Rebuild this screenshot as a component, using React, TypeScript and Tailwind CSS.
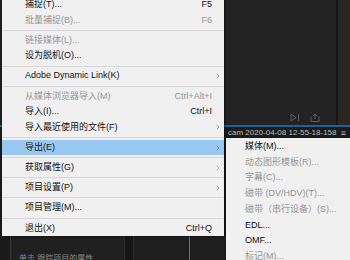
import { ChevronRight } from "lucide-react";

type Entry =
  | { type: "sep" }
  | { type: "item"; label: string; shortcut?: string; sub?: boolean; disabled?: boolean; active?: boolean };

const fileMenu: Entry[] = [
  { type: "item", label: "捕捉(T)...", shortcut: "F5" },
  { type: "item", label: "批量捕捉(B)...", shortcut: "F6", disabled: true },
  { type: "sep" },
  { type: "item", label: "链接媒体(L)...", disabled: true },
  { type: "item", label: "设为脱机(O)..." },
  { type: "sep" },
  { type: "item", label: "Adobe Dynamic Link(K)", sub: true },
  { type: "sep" },
  { type: "item", label: "从媒体浏览器导入(M)", shortcut: "Ctrl+Alt+I", disabled: true },
  { type: "item", label: "导入(I)...", shortcut: "Ctrl+I" },
  { type: "item", label: "导入最近使用的文件(F)", sub: true },
  { type: "sep" },
  { type: "item", label: "导出(E)", sub: true, active: true },
  { type: "sep" },
  { type: "item", label: "获取属性(G)", sub: true },
  { type: "sep" },
  { type: "item", label: "项目设置(P)", sub: true },
  { type: "sep" },
  { type: "item", label: "项目管理(M)..." },
  { type: "sep" },
  { type: "item", label: "退出(X)", shortcut: "Ctrl+Q" },
];

const exportMenu = [
  { label: "媒体(M)..." },
  { label: "动态图形模板(R)...", disabled: true },
  { label: "字幕(C)...", disabled: true },
  { label: "磁带 (DV/HDV)(T)...", disabled: true },
  { label: "磁带（串行设备）(S)...", disabled: true },
  { label: "EDL..." },
  { label: "OMF..." },
  { label: "标记(M)...", disabled: true },
];

const font = "font-['Liberation_Sans','Noto_Sans_CJK_SC',sans-serif]";

export default function App() {
  return (
    <div className={`relative h-[260px] w-[350px] overflow-hidden bg-[#1c1c1c] text-[9px] ${font}`}>
      {/* app behind the menu */}
      <div className="flex h-full flex-col">
        <div className="flex h-[125px]">
          <div className="w-[226px] bg-[#1e1e1e]" />
          <div className="flex flex-1 flex-col justify-end bg-[#232323] pb-[3px]">
            <div className="flex items-center gap-[10px] pl-[64px] text-[#5d5d5d]">
              <svg width="10" height="9" viewBox="0 0 10 9" fill="none" stroke="currentColor" strokeWidth="1">
                <path d="M1 1 L6 4.5 L1 8 Z" />
                <path d="M8.5 1 V8" />
              </svg>
              <svg width="10" height="9" viewBox="0 0 10 9" fill="none" stroke="currentColor" strokeWidth="1">
                <path d="M1 3.5 V8.5 H9 V3.5" />
                <path d="M5 6 V1 M3 3 L5 1 L7 3" />
              </svg>
            </div>
          </div>
          <div className="w-[2px] bg-[#161616]" />
          <div className="w-[12px] bg-[#2a2520]" />
        </div>
        <div className="h-[2px] bg-[#1f5f9c]" />
        <div className="flex h-[12px] items-center bg-[#1b1b1b] pr-[4px] text-[8px] text-[#bdbdbd]">
          <span className="flex-1 overflow-hidden whitespace-nowrap pl-[228px] leading-none">
            cam 2020-04-08 12-55-18-158
          </span>
          <span className="text-[9px] leading-none">≡</span>
        </div>
        <div className="flex flex-1">
          <div className="w-[10px] bg-[#1a1a1a]" />
          <div className="flex w-[114px] flex-col justify-end overflow-hidden border-l border-[#3a3a3a] bg-[#202020] pl-[8px]">
            <span className="translate-y-[5px] whitespace-nowrap text-[8px] text-[#8a8a8a]">单击 跟踪项目的属性</span>
          </div>
          <div className="w-[10px] border-x border-[#2e2e2e] bg-[#161616]" />
          <div className="flex flex-1 bg-[#1e1e1e]">
            <div className="w-[55px]" />
            <div className="w-px bg-[#2d7bd0]" />
          </div>
        </div>
      </div>

      {/* File menu */}
      <div className="absolute top-[-3px] left-[2px] w-[222px] bg-[#f0f0f0] shadow-[1px_1px_2px_rgba(0,0,0,0.4)]">
        {fileMenu.map((e, i) =>
          e.type === "sep" ? (
            <div key={i} className="flex h-[4.7px] items-center">
              <div className="h-px w-full bg-[#d7d7d7]" />
            </div>
          ) : (
            <div
              key={i}
              className={`flex h-[15.5px] items-center pl-[23px] ${e.active ? "bg-[#99c9f3]" : ""} ${
                e.disabled ? "text-[#959595]" : "text-[#111]"
              }`}
            >
              <span className="flex-1 whitespace-nowrap">{e.label}</span>
              {e.shortcut && <span className="whitespace-nowrap">{e.shortcut}</span>}
              <span className="flex w-[12px] justify-center text-[#555]">
                {e.sub && <ChevronRight size={8} strokeWidth={1.5} />}
              </span>
            </div>
          )
        )}
      </div>

      {/* Export submenu */}
      <div className="absolute top-[138px] left-[226px] w-[130px] bg-[#f0f0f0] pt-px shadow-[-1px_0_2px_rgba(0,0,0,0.25)]">
        {exportMenu.map((m) => (
          <div
            key={m.label}
            className={`flex h-[15.7px] items-center pl-[19px] whitespace-nowrap ${
              m.disabled ? "text-[#959595]" : "text-[#111]"
            }`}
          >
            {m.label}
          </div>
        ))}
      </div>
    </div>
  );
}
